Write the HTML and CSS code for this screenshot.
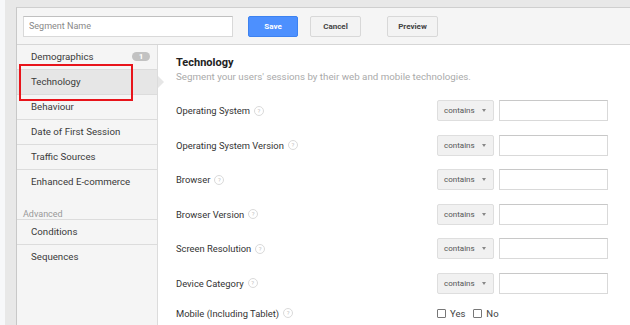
FILE: index.html
```html
<!DOCTYPE html>
<html>
  <head>
    <title>Segment Editor</title>
    <link rel="stylesheet" href="styles.css">
  </head>
  <body>
    <div class="page">
      <div class="panel">
        <div class="toolbar">
          <input type="text" class="segment-name" placeholder="Segment Name" />
          <button class="btn btn-save">Save</button>
          <button class="btn btn-cancel">Cancel</button>
          <button class="btn btn-preview">Preview</button>
        </div>
        <div class="editor">
          <ul class="sidebar">
            <li class="nav-item">Demographics <span class="badge">1</span></li>
            <li class="nav-item selected">Technology</li>
            <li class="nav-item">Behaviour</li>
            <li class="nav-item">Date of First Session</li>
            <li class="nav-item">Traffic Sources</li>
            <li class="nav-item last">Enhanced E-commerce</li>
            <li class="nav-heading">Advanced</li>
            <li class="nav-item">Conditions</li>
            <li class="nav-item last">Sequences</li>
          </ul>
          <div class="content">
            <h2>Technology</h2>
            <p class="subtitle">Segment your users' sessions by their web and mobile technologies.</p>

            <div class="field">
              <span class="label">Operating System <span class="help">?</span></span>
              <span class="select">contains <span class="caret"></span></span>
              <input type="text" class="value" />
            </div>
            <div class="field">
              <span class="label">Operating System Version <span class="help">?</span></span>
              <span class="select">contains <span class="caret"></span></span>
              <input type="text" class="value" />
            </div>
            <div class="field">
              <span class="label">Browser <span class="help">?</span></span>
              <span class="select">contains <span class="caret"></span></span>
              <input type="text" class="value" />
            </div>
            <div class="field">
              <span class="label">Browser Version <span class="help">?</span></span>
              <span class="select">contains <span class="caret"></span></span>
              <input type="text" class="value" />
            </div>
            <div class="field">
              <span class="label">Screen Resolution <span class="help">?</span></span>
              <span class="select">contains <span class="caret"></span></span>
              <input type="text" class="value" />
            </div>
            <div class="field">
              <span class="label">Device Category <span class="help">?</span></span>
              <span class="select">contains <span class="caret"></span></span>
              <input type="text" class="value" />
            </div>
            <div class="field field-check">
              <span class="label">Mobile (Including Tablet) <span class="help">?</span></span>
              <label class="check"><span class="box"></span>Yes</label>
              <label class="check"><span class="box"></span>No</label>
            </div>
          </div>
        </div>
      </div>
      <!-- red highlight drawn over the selected menu item -->
      <div class="highlight"></div>
    </div>
  </body>
</html>
```

FILE: styles.css
```css
body {
  margin: 0;
  font-family: Roboto, "Liberation Sans", Arial, sans-serif;
  background-color: #f7f8fa;
  overflow: hidden;
}

.page {
  position: relative;
  height: 325px;
  margin-left: 5px;
  padding: 7px 0 0 11px;
  background-color: #e8e8e8;
}

.panel {
  height: 100%;
  border-top: 1px solid #cfcfcf;
  border-left: 1px solid #c8c8c8;
  background-color: #fff;
}

/* Top toolbar with name field and buttons */
.toolbar {
  display: flex;
  align-items: center;
  height: 36px;
  padding: 0 6px;
  background-color: #f5f5f5;
  border-bottom: 1px solid #d6d6d6;
}

.segment-name {
  width: 210px;
  height: 21px;
  box-sizing: border-box;
  padding: 0 5px;
  border: 1px solid #d9d9d9;
  border-top-color: #c0c0c0;
  font-family: inherit;
  font-size: 9px;
  color: #333;
}

.segment-name::placeholder {
  color: #888;
}

.btn {
  height: 21px;
  box-sizing: border-box;
  border-radius: 2px;
  font-family: inherit;
  font-size: 8px;
  font-weight: bold;
  padding: 0;
}

.btn-save {
  width: 50px;
  margin-left: 15px;
  background-color: #4d90fe;
  border: 1px solid #3d82f0;
  color: #fff;
}

.btn-cancel,
.btn-preview {
  width: 51px;
  background-color: #f3f3f3;
  border: 1px solid #d8d8d8;
  color: #444;
}

.btn-cancel {
  margin-left: 12px;
}

.btn-preview {
  margin-left: 26px;
}

.editor {
  display: flex;
  height: 280px;
}

/* Left menu */
.sidebar {
  width: 140px;
  margin: 0;
  padding: 0;
  list-style: none;
  background-color: #f5f5f5;
  border-right: 1px solid #dcdcdc;
  font-size: 9.7px;
  color: #3a3a3a;
}

.nav-item {
  position: relative;
  display: flex;
  align-items: center;
  height: 22px;
  padding: 0 0 2px 14px;
  border-bottom: 1px solid #dcdcdc;
}

.nav-item.last {
  border-bottom: none;
}

.nav-item.selected {
  background-color: #e6e6e6;
}

.nav-item.selected::after {
  content: "";
  position: absolute;
  right: -7px;
  top: 6px;
  border-left: 6px solid #e6e6e6;
  border-top: 6px solid transparent;
  border-bottom: 6px solid transparent;
}

.badge {
  margin-left: auto;
  margin-right: 7px;
  width: 18px;
  height: 9px;
  line-height: 9px;
  border-radius: 5px;
  background-color: #c2c2c2;
  color: #fff;
  font-size: 8px;
  font-weight: bold;
  text-align: center;
}

.nav-heading {
  height: 11px;
  margin-top: 14px;
  padding-left: 6px;
  font-size: 9px;
  line-height: 12px;
  color: #999;
  border-bottom: 1px solid #dcdcdc;
}

/* Main form */
.content {
  flex: 1;
  padding: 11px 0 0 18px;
}

.content h2 {
  margin: 0;
  font-size: 11px;
  font-weight: bold;
  color: #222;
}

.subtitle {
  margin: 2px 0 18px;
  font-size: 9.75px;
  color: #aaa;
}

.field {
  display: flex;
  align-items: center;
  height: 21px;
  margin-bottom: 13.5px;
}

.field-check {
  height: 12px;
}

.label {
  display: flex;
  align-items: center;
  width: 261px;
  font-size: 9.4px;
  color: #333;
}

.help {
  display: inline-block;
  width: 8px;
  height: 8px;
  margin-left: 4px;
  border: 1px solid #dadada;
  border-radius: 50%;
  font-size: 6px;
  line-height: 8px;
  text-align: center;
  color: #c4c4c4;
}

.select {
  display: flex;
  align-items: center;
  width: 57px;
  height: 21px;
  box-sizing: border-box;
  padding-left: 6px;
  background-color: #f1f1f1;
  border: 1px solid #dedede;
  border-radius: 2px;
  font-size: 8px;
  color: #555;
}

.caret {
  margin-left: auto;
  margin-right: 7px;
  border-top: 3px solid #888;
  border-left: 2.5px solid transparent;
  border-right: 2.5px solid transparent;
}

.value {
  width: 109px;
  height: 21px;
  box-sizing: border-box;
  margin: 0 0 0 5px;
  border: 1px solid #d9d9d9;
  border-top-color: #c8c8c8;
}

.check {
  display: flex;
  align-items: center;
  margin-right: 8px;
  font-size: 9.5px;
  color: #444;
}

.check .box {
  width: 7px;
  height: 7px;
  margin-right: 4px;
  border: 1px solid #777;
  border-radius: 1px;
  background-color: #fff;
}

.highlight {
  position: absolute;
  left: 14px;
  top: 64px;
  width: 110px;
  height: 33px;
  border: 2px solid #e8141b;
}
```
